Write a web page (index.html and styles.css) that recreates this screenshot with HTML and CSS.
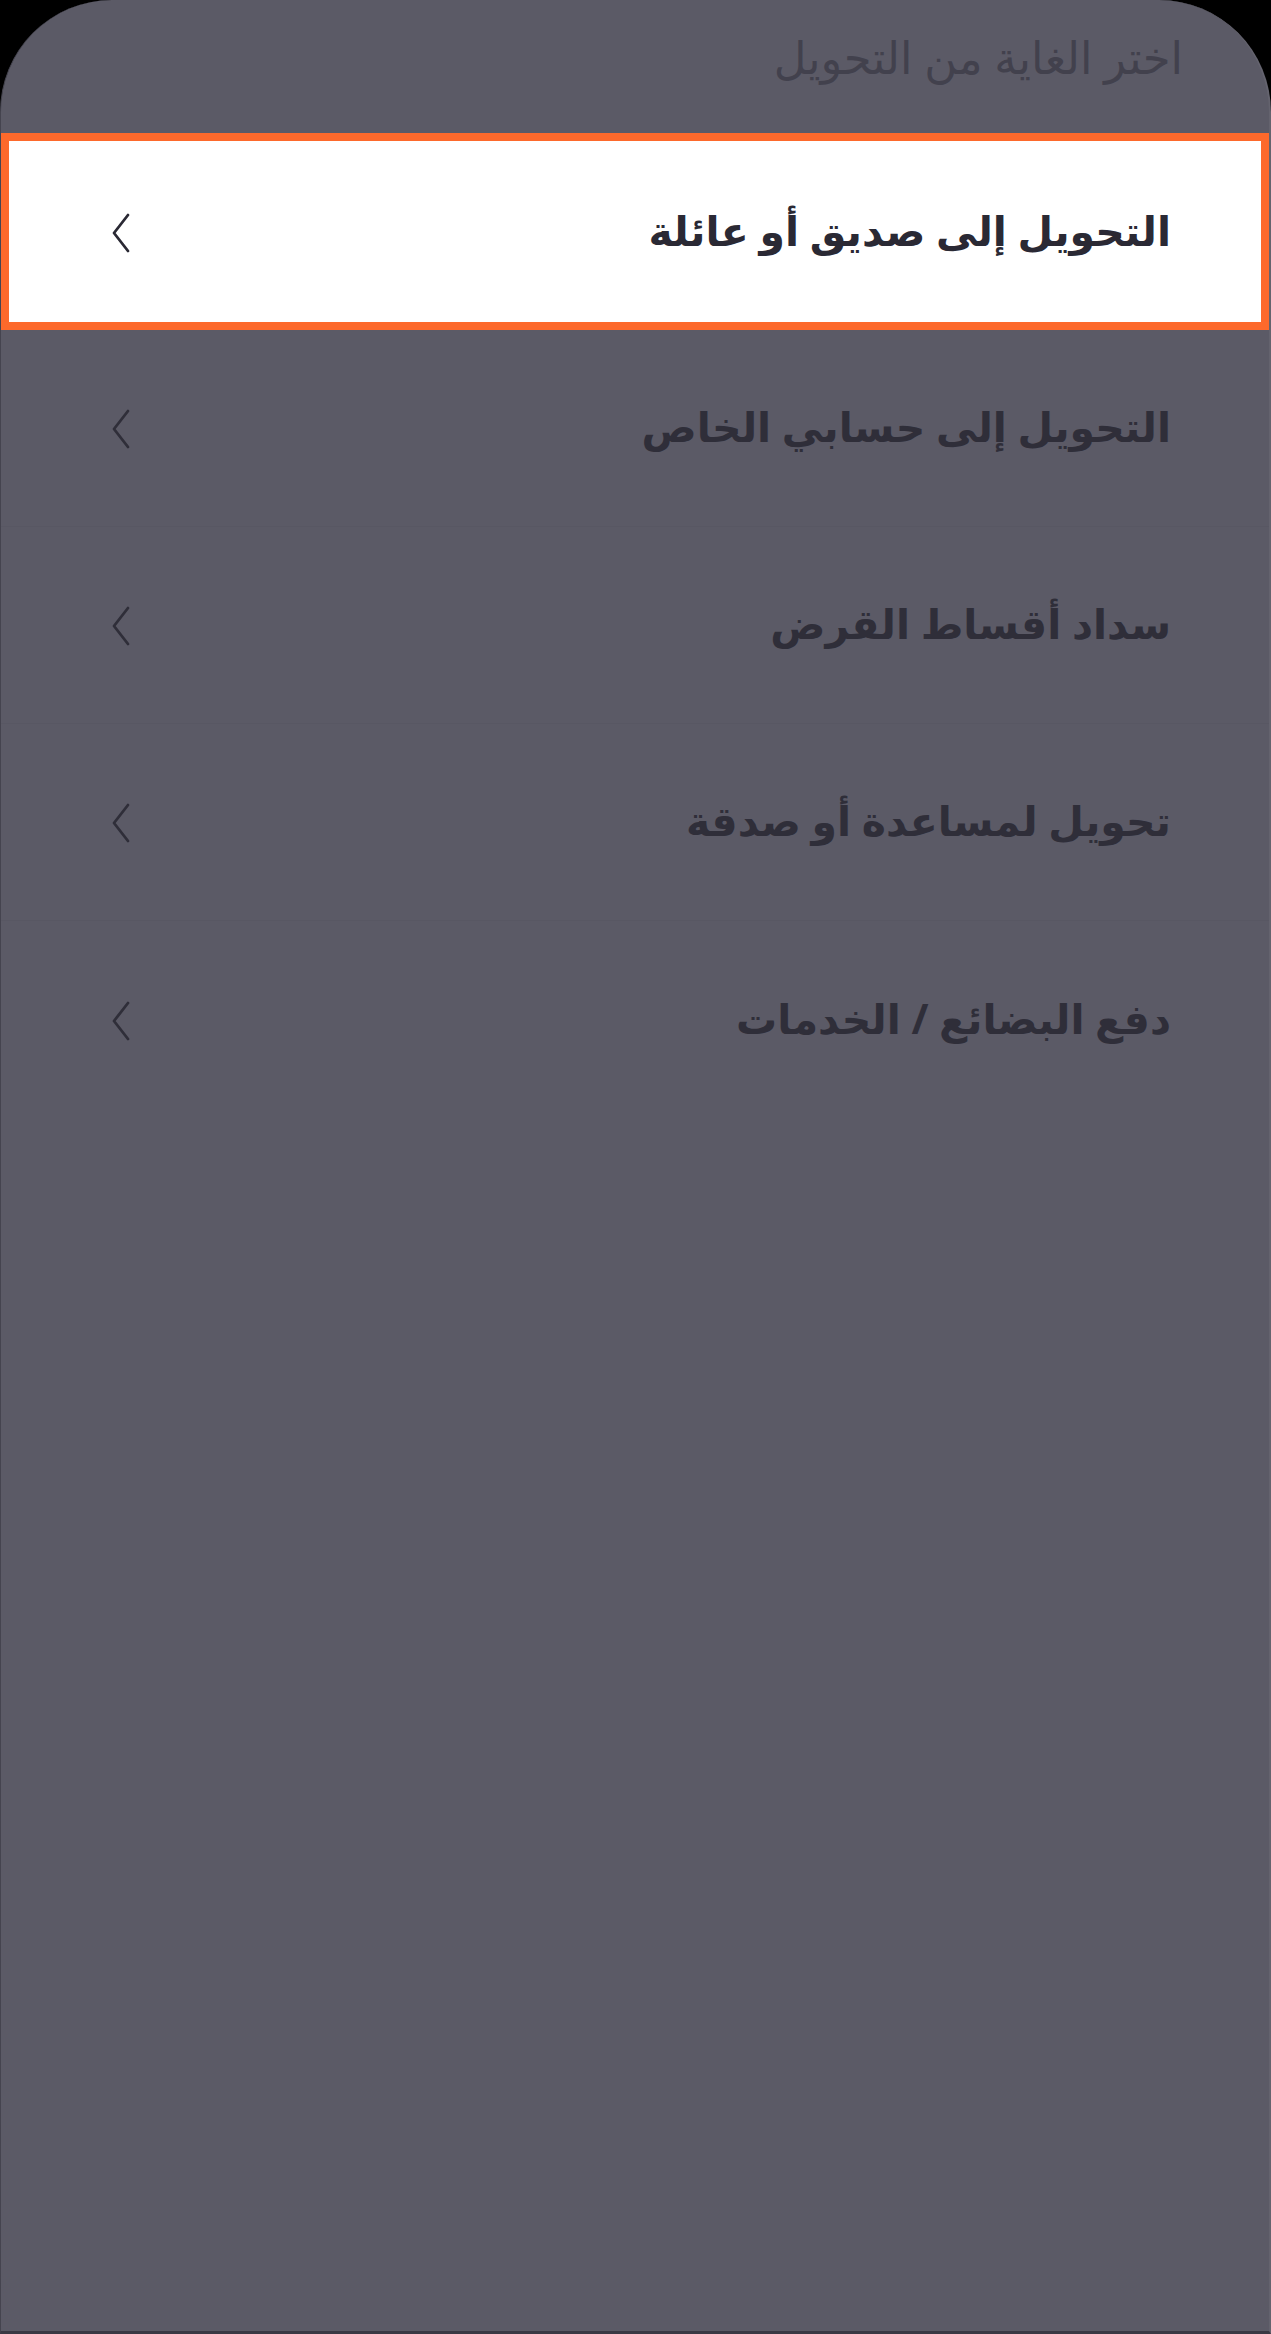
FILE: index.html
```
<!DOCTYPE html>
<html lang="ar" dir="rtl">
<head>
<meta charset="utf-8">
<title>اختر الغاية من التحويل</title>
<link rel="stylesheet" href="styles.css">
</head>
<body>
<div class="sheet">
  <div class="header">اختر الغاية من التحويل</div>
  <ul class="list">
    <li class="row active"><span class="label">التحويل إلى صديق أو عائلة</span><svg class="chev" viewBox="0 0 20 40" width="20" height="40"><path d="M17 2 L3 20 L17 38" fill="none" stroke="currentColor" stroke-width="2.8" stroke-linecap="round" stroke-linejoin="round"/></svg></li>
    <li class="row"><span class="label">التحويل إلى حسابي الخاص</span><svg class="chev" viewBox="0 0 20 40" width="20" height="40"><path d="M17 2 L3 20 L17 38" fill="none" stroke="currentColor" stroke-width="2.8" stroke-linecap="round" stroke-linejoin="round"/></svg></li>
    <li class="row"><span class="label">سداد أقساط القرض</span><svg class="chev" viewBox="0 0 20 40" width="20" height="40"><path d="M17 2 L3 20 L17 38" fill="none" stroke="currentColor" stroke-width="2.8" stroke-linecap="round" stroke-linejoin="round"/></svg></li>
    <li class="row"><span class="label">تحويل لمساعدة أو صدقة</span><svg class="chev" viewBox="0 0 20 40" width="20" height="40"><path d="M17 2 L3 20 L17 38" fill="none" stroke="currentColor" stroke-width="2.8" stroke-linecap="round" stroke-linejoin="round"/></svg></li>
    <li class="row last"><span class="label">دفع البضائع / الخدمات</span><svg class="chev" viewBox="0 0 20 40" width="20" height="40"><path d="M17 2 L3 20 L17 38" fill="none" stroke="currentColor" stroke-width="2.8" stroke-linecap="round" stroke-linejoin="round"/></svg></li>
  </ul>
</div>
</body>
</html>
```
FILE: styles.css
```
html, body {
  margin: 0;
  padding: 0;
  background: #000;
}
body {
  font-family: "Noto Sans", "DejaVu Sans", sans-serif;
}
.sheet {
  box-sizing: border-box;
  width: 1271px;
  height: 2334px;
  background: #5b5a66;
  border-radius: 112px 112px 0 0;
  border-left: 1px solid #45444f;
  border-right: 2px solid #64636e;
  border-bottom: 3px solid #3a3944;
  overflow: hidden;
}
.header {
  box-sizing: border-box;
  height: 133px;
  padding: 27px 86px 0 0;
  font-size: 45px;
  line-height: 60px;
  color: #42414d;
}
.list {
  list-style: none;
  margin: 0;
  padding: 0;
}
.row {
  box-sizing: border-box;
  height: 197px;
  display: flex;
  align-items: center;
  justify-content: space-between;
  padding: 0 98px 0 110px;
  border-bottom: 1px solid #585763;
  color: #2f2e39;
}
.row.last {
  border-bottom: none;
}
.row.active {
  background: #fff;
  border: 8px solid #fd692b;
  padding: 0 90px 0 102px;
  color: #2a2934;
}
.label {
  font-size: 41px;
  font-weight: bold;
  line-height: 60px;
  margin-top: -4px;
}
.chev {
  display: block;
  margin-top: 2px;
}
```
